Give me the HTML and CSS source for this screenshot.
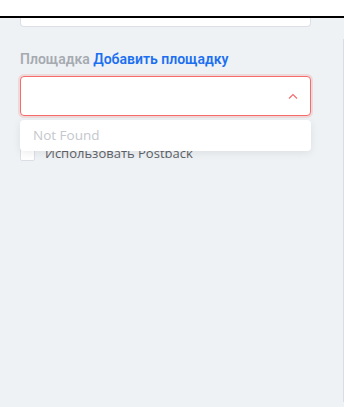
FILE: index.html
```html
<!DOCTYPE html>
<html lang="ru">
<head>
  <meta charset="UTF-8" />
  <meta name="viewport" content="width=device-width, initial-scale=1" />
  <title>Площадка</title>
  <link rel="stylesheet" href="styles.css">
</head>
<body>
  <div class="topbar"></div>
  <div class="page">
    <div class="form">
      <div class="prev-input"></div>

      <div class="field">
        <div class="label">Площадка <a class="link" href="#">Добавить площадку</a></div>
        <div class="select-wrap">
          <div class="select">
            <svg class="arrow" width="10" height="6" viewBox="0 0 10 6">
              <path d="M1 5.5 L5 1.5 L9 5.5" fill="none" stroke="#f56c6c" stroke-width="1.2" />
            </svg>
          </div>
          <div class="dropdown">Not Found</div>
        </div>
      </div>

      <label class="check">
        <span class="box"></span>
        Использовать Postback
      </label>
    </div>
    <div class="side"></div>
  </div>
</body>
</html>
```

FILE: styles.css
```css
body {
  margin: 0;
  background: #eef2f5;
  font-family: Roboto, "Noto Sans", sans-serif;
}
.topbar {
  height: 16px;
  background: #fff;
  border-bottom: 2px solid #000;
}
.page {
  display: flex;
  height: 384px;
}
.form {
  width: 291px;
  margin-left: 20px;
}
.prev-input {
  height: 8px;
  background: #fff;
  border: 1px solid #dcdfe6;
  border-top: none;
  border-radius: 0 0 4px 4px;
}
.field {
  margin-top: 22px;
}
.label {
  font-size: 14px;
  line-height: 20px;
  font-weight: 600;
  color: #a6aab1;
}
.link {
  color: #1b6ff0;
  text-decoration: none;
}
.select-wrap {
  position: relative;
  margin-top: 7px;
}
.select {
  height: 38px;
  background: #fff;
  border: 1px solid #f56c6c;
  border-radius: 4px;
  box-shadow: 0 0 0 2px rgba(245, 108, 108, 0.18);
  display: flex;
  align-items: center;
  justify-content: flex-end;
  padding-right: 12px;
}
.arrow {
  display: block;
}
.dropdown {
  position: absolute;
  left: 0;
  right: 0;
  top: 44px;
  height: 31px;
  background: #fff;
  border-radius: 4px;
  box-shadow: 0 2px 8px rgba(0, 0, 0, 0.08);
  padding-left: 13px;
  font-family: "Open Sans", sans-serif;
  font-size: 13.5px;
  line-height: 31px;
  color: #c4c7cd;
  z-index: 2;
}
.check {
  display: flex;
  align-items: center;
  margin-top: 28px;
  font-family: "Open Sans", sans-serif;
  font-size: 13px;
  color: #5f6268;
}
.box {
  width: 13px;
  height: 13px;
  border: 1px solid #dcdfe6;
  border-radius: 2px;
  background: #fff;
  margin-right: 10px;
}
.side {
  margin-left: auto;
  margin-top: 21px;
  width: 0;
  border-left: 1px solid #dadee3;
  height: 366px;
}
```
